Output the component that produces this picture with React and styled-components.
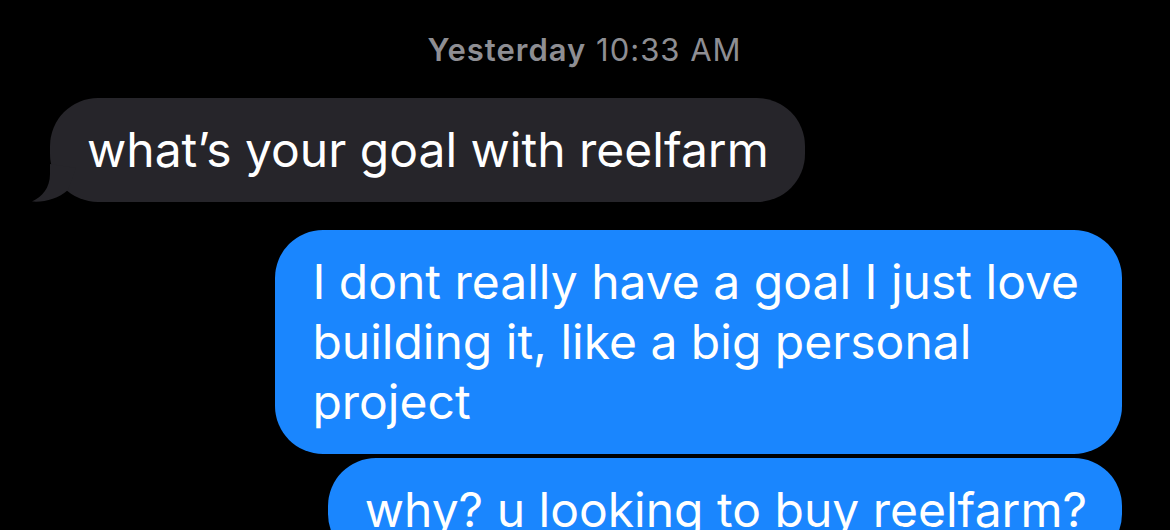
import React from "react";
import styled, { createGlobalStyle } from "styled-components";

const Global = createGlobalStyle`
  html, body {
    margin: 0;
    padding: 0;
    background: #000;
  }
  body {
    font-family: Inter, "Noto Sans", "Liberation Sans", sans-serif;
    -webkit-font-smoothing: antialiased;
  }
`;

const Screen = styled.div`
  width: 1170px;
  height: 530px;
  overflow: hidden;
  background: #000;
  display: flex;
  flex-direction: column;
  padding: 31px 48px 0 50px;
  box-sizing: border-box;
`;

const Stamp = styled.div`
  text-align: center;
  color: #8e8e93;
  font-size: 31px;
  line-height: 38px;
  letter-spacing: 1px;
  margin-bottom: 29px;
  padding-right: 3px;

  b {
    font-weight: 600;
  }
`;

const Row = styled.div`
  display: flex;
  justify-content: ${(p) => (p.$me ? "flex-end" : "flex-start")};
  margin-top: ${(p) => p.$gap || 0}px;
`;

const Bubble = styled.div`
  position: relative;
  background: ${(p) => (p.$me ? "#1a86fe" : "#26252a")};
  color: #fff;
  font-size: 48px;
  line-height: 60px;
  padding: 22px ${(p) => p.$right || 36}px 22px 37px;
  border-radius: 48px;
  white-space: nowrap;
`;

const Tail = styled.svg`
  position: absolute;
  left: -18px;
  bottom: 0;
  width: 60px;
  height: 40px;
`;

export default function App() {
  return (
    <>
      <Global />
      <Screen>
        <Stamp>
          <b>Yesterday</b> 10:33 AM
        </Stamp>
        <Row>
          <Bubble>
            what’s your goal with reelfarm
            <Tail viewBox="0 0 60 40">
              <path
                d="M18,2 L18,12 C18,26 10,35 0,39.5 C12,40.5 26,37 36,28 L44,6 Z"
                fill="#26252a"
              />
            </Tail>
          </Bubble>
        </Row>
        <Row $me $gap={28}>
          <Bubble $me $right={43}>
            I dont really have a goal I just love
            <br />
            building it, like a big personal
            <br />
            project
          </Bubble>
        </Row>
        <Row $me $gap={4}>
          <Bubble $me $right={35}>
            why? u looking to buy reelfarm?
          </Bubble>
        </Row>
      </Screen>
    </>
  );
}
